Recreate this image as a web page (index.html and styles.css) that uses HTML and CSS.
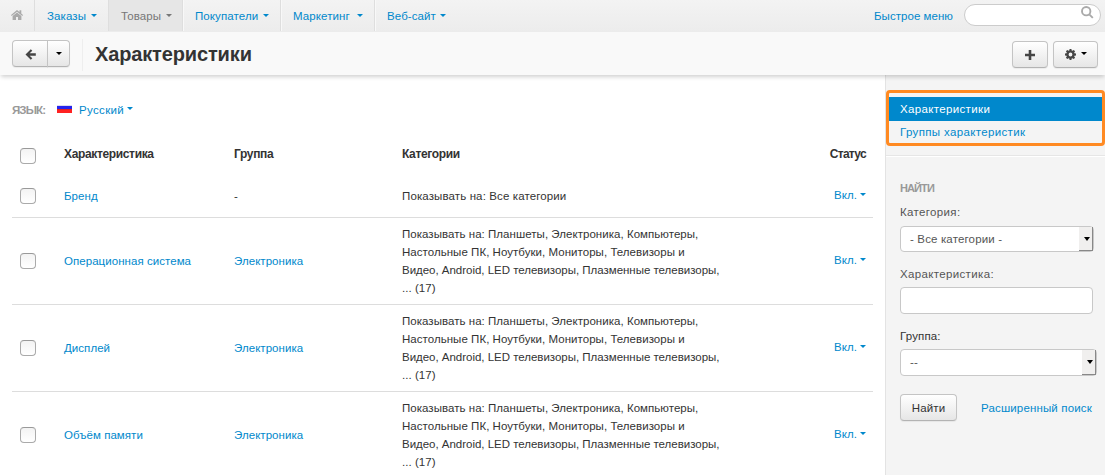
FILE: index.html
```html
<!DOCTYPE html>
<html lang="ru">
<head>
<meta charset="utf-8">
<title>Характеристики</title>
<link rel="stylesheet" href="styles.css">
</head>
<body>
<header class="navbar">
  <nav class="menu">
    <a class="home" aria-label="Home"><svg width="12" height="10" viewBox="0 0 12 10"><path d="M6 0 0 5.100l.7 1L6 1.700 11.300 6.100l.7-1-1.700-1.500V.3H8.500v1.800z"/><path d="M6 2.400 1.600 6v4H5V7h2v3h3.400V6z"/></svg></a>
    <a class="item orders"><span>Заказы</span><i class="caret"></i></a>
    <a class="item products active"><span>Товары</span><i class="caret"></i></a>
    <a class="item customers"><span>Покупатели</span><i class="caret"></i></a>
    <a class="item marketing"><span>Маркетинг</span><i class="caret"></i></a>
    <a class="item website"><span>Веб-сайт</span><i class="caret"></i></a>
  </nav>
  <a class="quick">Быстрое меню</a>
  <div class="search"><svg width="13" height="13" viewBox="0 0 13 13"><circle cx="5.200" cy="5.200" r="4.200"/><path d="m8.300 8.300 3.500 3.500"/></svg></div>
</header>
<div class="titlebar">
  <div class="btn-group">
    <button class="btn back" aria-label="Back"><svg width="11" height="11" viewBox="0 0 11 11"><path d="M5.800.2.5 5.500l5.300 5.300 1.500-1.500L4.700 6.700h6.100V4.300H4.700l2.600-2.600z"/></svg></button><button class="btn drop" aria-label="More"><i class="caret"></i></button>
  </div>
  <h1>Характеристики</h1>
  <div class="actions">
    <button class="btn add" aria-label="Add"><svg width="10" height="10" viewBox="0 0 10 10"><path d="M3.700 0h2.600v3.700H10v2.600H6.300V10H3.700V6.300H0V3.700h3.700z"/></svg></button>
    <button class="btn gear" aria-label="Settings"><svg width="11" height="11" viewBox="0 0 11 11"><path fill-rule="evenodd" d="M4.600 0h1.800l.3 1.500.7.300L8.700.900 10.100 2.300 9.200 3.600l.3.700 1.500.3v1.800l-1.500.3-.3.700.9 1.300-1.400 1.400-1.300-.9-.7.300L6.400 11H4.600l-.3-1.500-.7-.3-1.300.9L.9 8.700l.9-1.300-.3-.7L0 6.400V4.600l1.500-.3.3-.7L.9 2.300 2.300.9l1.300.9.7-.3zM5.500 3.600a1.900 1.900 0 1 0 0 3.800 1.900 1.900 0 0 0 0-3.800z"/></svg><i class="caret"></i></button>
  </div>
</div>
<div class="page">
  <main class="content">
    <div class="language"><span class="label">ЯЗЫК:</span><i class="flag"></i><a>Русский<i class="caret"></i></a></div>
    <div class="row head"><i class="check"></i><b>Характеристика</b><b>Группа</b><b>Категории</b><b class="status">Статус</b></div>
    <div class="row short"><i class="check"></i><a>Бренд</a><span>-</span><span>Показывать на: Все категории</span><a class="status">Вкл.<i class="caret"></i></a></div>
    <div class="row"><i class="check"></i><a>Операционная система</a><a>Электроника</a><span>Показывать на: Планшеты, Электроника, Компьютеры,<br>Настольные ПК, Ноутбуки, Мониторы, Телевизоры и<br><span class="tight">Видео, Android, LED телевизоры, Плазменные телевизоры,</span><br>... (17)</span><a class="status">Вкл.<i class="caret"></i></a></div>
    <div class="row"><i class="check"></i><a>Дисплей</a><a>Электроника</a><span>Показывать на: Планшеты, Электроника, Компьютеры,<br>Настольные ПК, Ноутбуки, Мониторы, Телевизоры и<br><span class="tight">Видео, Android, LED телевизоры, Плазменные телевизоры,</span><br>... (17)</span><a class="status">Вкл.<i class="caret"></i></a></div>
    <div class="row"><i class="check"></i><a>Объём памяти</a><a>Электроника</a><span>Показывать на: Планшеты, Электроника, Компьютеры,<br>Настольные ПК, Ноутбуки, Мониторы, Телевизоры и<br><span class="tight">Видео, Android, LED телевизоры, Плазменные телевизоры,</span><br>... (17)</span><a class="status">Вкл.<i class="caret"></i></a></div>
  </main>
  <aside class="sidebar">
    <div class="sections">
      <a class="current">Характеристики</a>
      <a>Группы характеристик</a>
    </div>
    <form class="filter">
      <h2>НАЙТИ</h2>
      <label>Категория:</label>
      <div class="select"><span>- Все категории -</span><i class="arrow"></i></div>
      <label>Характеристика:</label>
      <div class="input"></div>
      <label class="dark">Группа:</label>
      <div class="select wide"><span>--</span><i class="arrow"></i></div>
      <div class="submit"><button type="button" class="btn find">Найти</button><a>Расширенный поиск</a></div>
    </form>
  </aside>
</div>
</body>
</html>
```
FILE: styles.css
```css
*, ::before { box-sizing: border-box; }
body { margin: 0; height: 475px; overflow: hidden; background: #fff; color: #333; font: 11.5px/18px "Liberation Sans", Arial, sans-serif; letter-spacing: .04px; }
a { color: #08c; white-space: nowrap; }
.caret { display: inline-block; flex: none; width: 6px; height: 3px; border: 3px solid transparent; border-top-color: currentColor; border-bottom: 0; }

.navbar { display: flex; height: 32px; background: linear-gradient(#f3f3f3, #ececec); }
.menu { display: flex; flex: 1; height: 31px; letter-spacing: .1px; }
.home { display: flex; width: 35px; padding: 10px 0 0 11px; border-right: 1px solid #dedede; }
.home svg { fill: #aaa; }
.item { display: flex; align-items: center; justify-content: space-between; padding: 0 11px 0 12px; border-right: 1px solid #dedede; box-shadow: 1px 0 #f8f8f8; }
.orders { width: 73px; padding-right: 11px; border: 0; box-shadow: none; }
.products { width: 75px; padding-left: 13px; padding-right: 10px; }
.customers { width: 98px; }
.marketing { width: 94px; padding-right: 11px; }
.website { width: 83px; padding-right: 12px; border: 0; box-shadow: none; }
.active { background: #e6e6e6; color: #777; box-shadow: inset 1px 0 #dedede, 1px 0 #f8f8f8; }
.quick { margin: 7px 11px 0 0; letter-spacing: .04px; }
.search { display: flex; justify-content: flex-end; width: 137px; height: 22px; margin: 4px 4px 0 0; padding: 1px 6px; background: #fff; border: 1px solid #ccc; border-radius: 11px; }
.search svg { fill: none; stroke: #aaa; stroke-width: 1.900; }

.titlebar { position: relative; display: flex; height: 43px; padding: 8px 7px 0 12px; background: #f9f9f9; box-shadow: 0 3px 4px -1px rgba(0,0,0,.18); }
.btn { display: flex; align-items: center; justify-content: center; height: 27px; padding: 0; color: #333; font: inherit; letter-spacing: inherit; background: linear-gradient(#fff, #e6e6e6); border: 1px solid #c4c4c4; border-bottom-color: #b3b3b3; border-radius: 4px; box-shadow: 0 1px 1px rgba(0,0,0,.06); }
.btn svg { fill: #444; }
.btn .caret { color: #000; }
.btn-group { display: flex; }
.back { width: 36px; border-radius: 4px 0 0 4px; }
.back svg { margin-top: 2px; }
.drop { width: 23px; margin-left: -1px; border-radius: 0 4px 4px 0; }
h1 { flex: 1; height: 32px; margin: -1px 0 0 12px; padding: 3px 0 0 12px; border-left: 1px solid #eee; font-size: 20px; line-height: 24px; letter-spacing: -.14px; }
.actions { display: flex; gap: 5px; padding-top: 1px; }
.add { width: 36px; }
.gear { width: 45px; gap: 5px; }
.gear .caret { margin-top: -2px; }

.page { display: flex; height: 400px; }
.content { width: 885px; padding: 25px 12px 0; }
.language { display: flex; align-items: center; height: 20px; letter-spacing: .35px; }
.label { width: 45px; color: #999; font-weight: bold; letter-spacing: -.9px; }
.flag { width: 15px; height: 8px; margin: -2px 7px 0 0; background: linear-gradient(#dde 0 1px, #2424ee 1px 4px, #d22 4px 5px, #f22 5px); }
.language .caret { margin-left: 3px; vertical-align: 4px; }
.row { display: grid; grid-template-columns: 52px 170px 168px 1fr auto; align-items: center; height: 87px; border-bottom: 1px solid #ddd; }
.row > span { white-space: nowrap; }
.tight { letter-spacing: -.02px; }
.row a { letter-spacing: .05px; }
.head { height: 55px; padding-top: 16px; border: 0; }
.head b { margin-top: -3px; font-size: 12px; letter-spacing: -.35px; }
.head b.status { letter-spacing: -.7px; }
.short { height: 43px; }
.short > span { letter-spacing: .12px; }
.check { width: 16px; height: 16px; margin-left: 8px; border: 1px solid #aaa; border-top-color: #999; border-radius: 4px; background: linear-gradient(#f3f3f3, #fff); }
.row a.status { display: flex; gap: 3px; padding: 0 7px 2px 0; }
.status .caret { margin-top: 7px; }
.head .status { padding-right: 7px; }

.sidebar { width: 220px; background: #f4f4f4; border-left: 1px solid #e3e3e3; letter-spacing: .15px; }
.sections { height: 56px; margin: 15px 0 0; padding: 4px 0 0; border: 3px solid #ff8a22; border-radius: 4px; letter-spacing: .35px; }
.sections a { display: block; height: 23px; padding-left: 11px; line-height: 23px; }
.sections .current { height: 24px; color: #fff; background: #08c; line-height: 24px; }
.filter { margin-top: 9px; padding: 23px 0 0 14px; border-top: 1px solid #e6e6e6; box-shadow: inset 0 1px #fff; }
h2 { margin: 0 0 6px; color: #999; font-size: 11px; line-height: 18px; letter-spacing: -.9px; }
label { display: block; height: 22px; color: #555; line-height: 18px; letter-spacing: .35px; }
.dark { color: #333; letter-spacing: .15px; }
.select, .input { display: flex; width: 193px; height: 26px; margin-bottom: 13px; background: #fff; border: 1px solid #c8c8c8; border-radius: 4px; }
.select:first-of-type { margin-top: 1px; }
.input { height: 27px; }
.select span { flex: 1; padding-left: 9px; color: #555; line-height: 25px; }
.arrow { width: 14px; border: solid #888; border-width: 0 1px 1px 0; background: #f0efee; }
.arrow::before { content: ""; display: block; width: 6px; height: 4px; margin: 10px 0 0 5px; border: 3px solid transparent; border-top: 4px solid #000; border-bottom: 0; }
.select:first-of-type { width: 194px; }
.wide { width: 197px; height: 27px; margin-bottom: 18px; }
.submit { display: flex; align-items: center; gap: 24px; }
.find { width: 57px; }
```
